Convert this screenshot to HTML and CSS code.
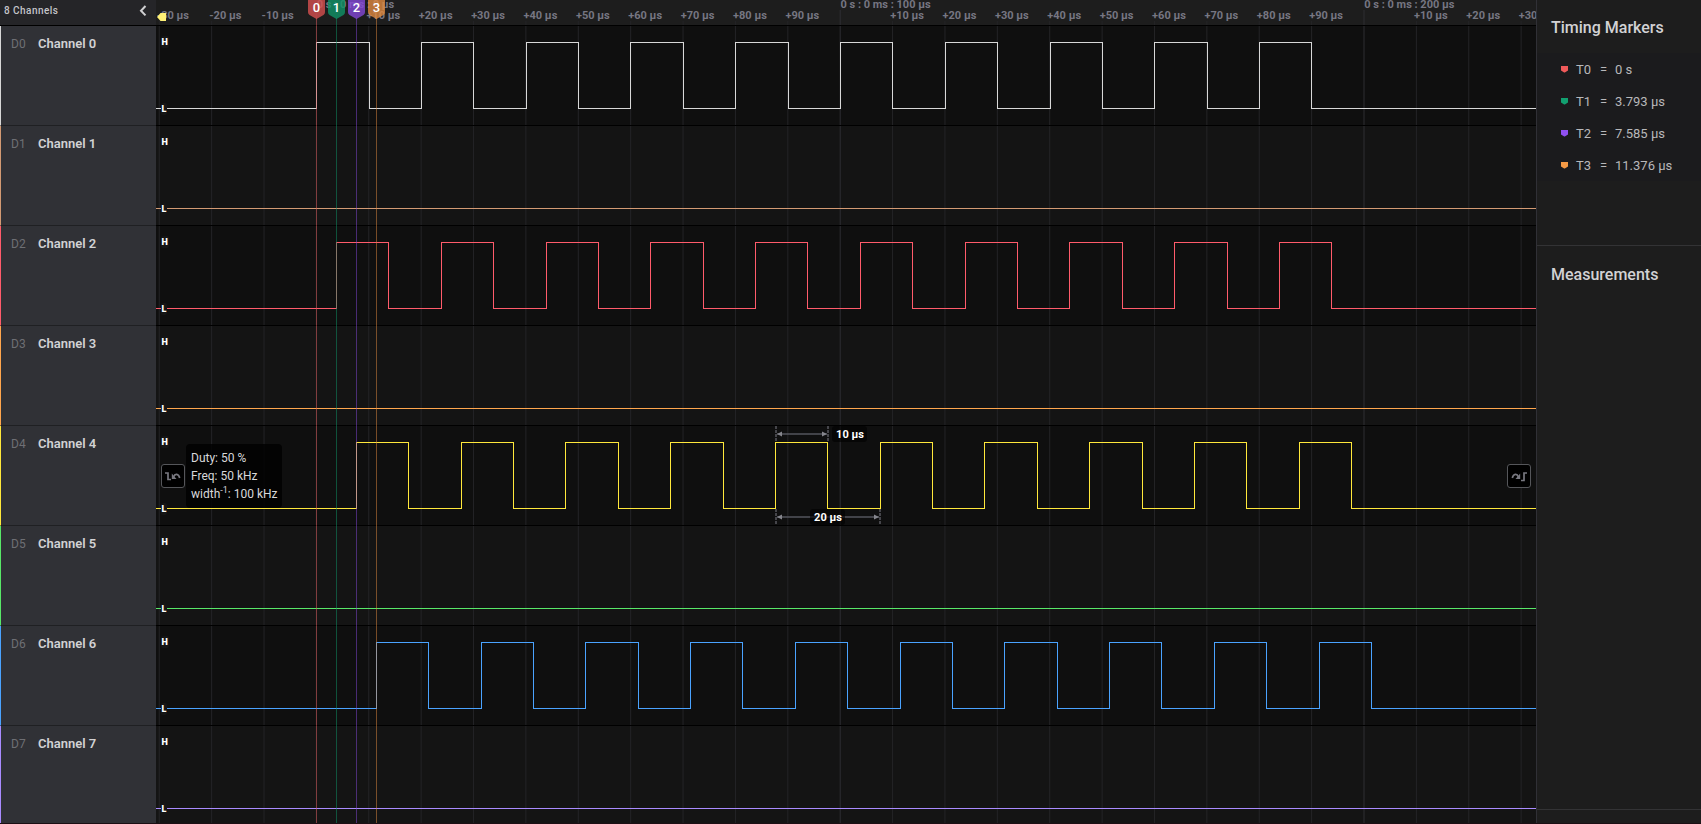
FILE: index.html
```html
<!DOCTYPE html>
<html lang="en">
<head>
    <meta charset="UTF-8" />
    <title>Logic Analyzer</title>
    <link rel="stylesheet" href="styles.css">
</head>
<body>
    <div class="app">
        <aside class="channels">
            <header class="channels-header">
                <span>8 Channels</span>
                <svg class="collapse" width="8" height="12" viewBox="0 0 8 12"><path d="M6.5 1 L2 5.7 L6.5 10.4" /></svg>
            </header>
            <div id="channelList"></div>
        </aside>

        <main class="plot" id="plot">
            <svg class="ruler" id="ruler"></svg>
            <div id="lanes"></div>
            <svg class="markers" id="markers"></svg>

            <svg class="measure" id="measure"></svg>
            <span class="measure-label width-label">10 µs</span>
            <span class="measure-label period-label">20 µs</span>

            <button class="nav nav-prev" aria-label="Previous edge">
                <svg width="22" height="22" viewBox="0 0 22 22">
                    <path d="M3 8 H6 V14.5 H9" />
                    <path d="M11.5 12 C13 8.2 16.5 8.6 17.7 13" />
                    <path class="head" d="M9.8 8.5 V14 H14.5 Z" />
                </svg>
            </button>
            <button class="nav nav-next" aria-label="Next edge">
                <svg width="22" height="22" viewBox="0 0 22 22">
                    <path d="M19 8 H16 V15.5 H13" />
                    <path d="M10.5 12 C9 8.2 5.5 8.6 4.3 13" />
                    <path class="head" d="M12.2 8.5 V14 H7.5 Z" />
                </svg>
            </button>

            <div class="tooltip">
                <div>Duty: 50 %</div>
                <div>Freq: 50 kHz</div>
                <div>width<sup>-1</sup>: 100 kHz</div>
            </div>
        </main>

        <aside class="sidebar">
            <section class="panel timing">
                <h2>Timing Markers</h2>
                <ul class="marker-list">
                    <li><i class="flag red"></i><span class="name">T0</span><span class="eq">=</span><span>0 s</span></li>
                    <li><i class="flag green"></i><span class="name">T1</span><span class="eq">=</span><span>3.793 µs</span></li>
                    <li><i class="flag purple"></i><span class="name">T2</span><span class="eq">=</span><span>7.585 µs</span></li>
                    <li><i class="flag orange"></i><span class="name">T3</span><span class="eq">=</span><span>11.376 µs</span></li>
                </ul>
            </section>
            <section class="panel measurements">
                <h2>Measurements</h2>
            </section>
        </aside>
    </div>
    <script src="script.js"></script>
</body>
</html>
```
FILE: styles.css
```css
* {
    box-sizing: border-box;
}

body {
    margin: 0;
    background: #1d1d1d;
    color: #d2d2d4;
    font-family: Roboto, sans-serif;
    overflow: hidden;
}

.app {
    display: grid;
    grid-template-columns: 156px 1fr 165px;
    height: 100vh;
    overflow: hidden;
    border-bottom: 1px solid #1c0f14;
}

/* Channel list */
.channels {
    background: #303136;
    overflow: hidden;
}

.channels-header {
    display: flex;
    align-items: center;
    justify-content: space-between;
    height: 26px;
    padding: 0 9px 4px 4px;
    background: #252528;
    border-bottom: 1px solid #000;
    font-size: 10px;
    font-weight: 500;
    letter-spacing: 0.45px;
    color: #c4c4c8;
}

.collapse {
    fill: none;
    stroke: #d0d0d2;
    stroke-width: 2;
}

.channel {
    display: flex;
    gap: 14px;
    height: 100px;
    padding: 10px 0 0 10px;
    border-left: 1px solid;
    border-bottom: 1px solid #1f2023;
    font-size: 13px;
    line-height: 16px;
}

.channel .id {
    width: 13px;
    color: #6e6f74;
    font-size: 12px;
    white-space: nowrap;
}

.channel .title {
    color: #d2d2d4;
    font-weight: 600;
}

/* Waveforms */
.plot {
    position: relative;
    overflow: hidden;
    background: #0f0f0f;
}

.ruler,
.lane {
    display: block;
    width: 100%;
}

.ruler {
    height: 26px;
    background: #1d1d1d;
    border-bottom: 1px solid #000;
}

.ruler text {
    fill: #767682;
    font-size: 11px;
    font-weight: 700;
}

.lane {
    height: 100px;
    background: #0f0f0f;
    border-bottom: 1px solid #000;
}

.lane:nth-child(even) {
    background: #141414;
}

.grid-line {
    stroke: #242427;
}

.grid-line.major {
    stroke: #2e2e33;
}

.trace {
    fill: none;
    stroke-width: 1;
    shape-rendering: crispEdges;
}

.level-bg {
    fill: #161616;
}

.level {
    fill: #fff;
    font-size: 9px;
    font-weight: 900;
}

.markers {
    position: absolute;
    left: 0;
    top: 0;
    width: 100%;
    height: 100%;
}

.markers line {
    opacity: 0.5;
    shape-rendering: crispEdges;
}

.markers path {
    opacity: 0.8;
}

.markers text {
    fill: #fff;
    font-size: 13px;
    font-weight: 500;
    text-anchor: middle;
}

.measure {
    position: absolute;
    left: 619px;
    top: 426px;
    width: 110px;
    height: 100px;
    stroke: #55565e;
    stroke-width: 1.5;
}

.measure .tick {
    stroke-dasharray: 3 1;
    stroke-width: 2;
    stroke: #45454a;
}

.measure .arrow {
    fill: #85858c;
    stroke: none;
}

.measure-label {
    position: absolute;
    width: 35px;
    height: 16px;
    border-radius: 3px;
    background: rgba(0, 0, 0, 0.6);
    color: #fff;
    font-size: 11px;
    font-weight: 700;
    line-height: 17px;
    text-align: center;
}

.width-label {
    left: 676px;
    top: 426px;
    padding-left: 1px;
}

.period-label {
    left: 654px;
    top: 509px;
    padding-left: 1px;
}

.nav {
    position: absolute;
    top: 464px;
    width: 24px;
    height: 24px;
    padding: 0;
    border: 1px solid #55565a;
    border-radius: 3px;
    background: #000;
}

.nav-prev {
    left: 5px;
}

.nav-next {
    right: 5px;
}

.nav svg {
    display: block;
    fill: none;
    stroke: #77777f;
    stroke-width: 1.7;
}

.nav .head {
    fill: #77777f;
    stroke: none;
}

.tooltip {
    position: absolute;
    left: 30px;
    top: 444px;
    width: 96px;
    height: 64px;
    padding: 5px;
    border-radius: 4px;
    background: rgba(0, 0, 0, 0.8);
    color: #d8d8da;
    font-size: 12px;
    line-height: 18px;
    white-space: nowrap;
}

.tooltip sup {
    font-size: 9px;
    line-height: 0;
}

/* Right sidebar */
.sidebar {
    display: flex;
    flex-direction: column;
    border-left: 1px solid #303036;
    padding-bottom: 13px;
}

.panel {
    border-bottom: 1px solid #333335;
}

.panel h2 {
    margin: 0;
    padding-left: 14px;
    color: #d2d2d4;
    font-size: 16px;
    font-weight: 500;
    line-height: 20px;
}

.timing {
    height: 246px;
    padding-top: 18px;
}

.measurements {
    flex: 1;
    padding-top: 19px;
}

.marker-list {
    list-style: none;
    margin: 15px 0 0;
    padding: 0;
    background: #1b1b1d;
}

.marker-list li {
    display: flex;
    align-items: center;
    height: 32px;
    padding-left: 24px;
    color: #b8b8ba;
    font-size: 13px;
}

.flag {
    width: 7px;
    height: 7px;
    margin-right: 8px;
    clip-path: polygon(0 0, 100% 0, 100% 70%, 55% 100%, 45% 100%, 0 70%);
}

.flag.red { background: #f05a5a; }
.flag.green { background: #12a070; }
.flag.purple { background: #9050f0; }
.flag.orange { background: #f59a45; }

.name {
    width: 24px;
}

.eq {
    width: 15px;
}
```
FILE: script.js
```js
const ORIGIN = 160.2;   // x of 0 s inside the plot
const SCALE = 5.238;    // pixels per µs
const WIDTH = 1380;

const channels = [
    { color: '#d8d8d8', start: 0 },
    { color: '#d39a73' },
    { color: '#ff5b6b', start: 3.793 },
    { color: '#ffa64d' },
    { color: '#ffe83b', start: 7.585 },
    { color: '#58e868' },
    { color: '#4aa3ff', start: 11.376 },
    { color: '#a98bff' }
];

const markers = [
    { x: 160, color: '#d75050' },
    { x: 180, color: '#109468' },
    { x: 200, color: '#8448d8' },
    { x: 220, color: '#e08a40' }
];

function toX(us) {
    return Math.round(ORIGIN + us * SCALE) + 0.5;
}

// 10 pulses, 10 µs high and 10 µs low
function tracePath(start) {
    let d = 'M0 82.5';
    if (start !== undefined) {
        for (let i = 0; i < 10; i++) {
            const rise = toX(start + i * 20);
            const fall = toX(start + i * 20 + 10);
            d += ` H${rise} V16.5 H${fall} V82.5`;
        }
    }
    return d + ` H${WIDTH}`;
}

function gridLines(ruler) {
    let out = '';
    for (let i = -3; i <= 23; i++) {
        const x = (ORIGIN + 0.2 + i * 10 * SCALE).toFixed(2);
        const major = i % 10 === 0;
        const top = ruler ? (major ? 10 : 21) : 0;
        out += `<line class="grid-line${major ? ' major' : ''}" x1="${x}" x2="${x}" y1="${top}" y2="100" />`;
    }
    return out;
}

function drawRuler() {
    let out = gridLines(true);
    for (let i = -3; i <= 23; i++) {
        const x = ORIGIN + i * 10 * SCALE;
        if (i % 10 === 0) {
            out += `<text x="${x + 0.5}" y="8">0 s : 0 ms : ${i * 10} µs</text>`;
        } else {
            const n = i < 0 ? i * 10 : '+' + (i % 10) * 10;
            out += `<text x="${x - 2.2}" y="19.3">${n} µs</text>`;
        }
    }
    out += '<path d="M1 17 L4.5 13 H10 V21 H4.5 Z" fill="#fff176" />';
    document.getElementById('ruler').innerHTML = out;
}

function drawChannels() {
    let list = '';
    let lanes = '';
    channels.forEach((ch, i) => {
        list += `<div class="channel" style="border-left-color: ${ch.color}"><span class="id">D${i}</span><span class="title">Channel ${i}</span></div>`;
        lanes += `<svg class="lane">${gridLines(false)}
            <path class="trace" d="${tracePath(ch.start)}" stroke="${ch.color}" />
            <rect class="level-bg" x="5" y="10" width="8" height="12" rx="2" />
            <rect class="level-bg" x="5" y="77" width="6" height="12" rx="2" />
            <text class="level" x="5.5" y="19.2">H</text>
            <text class="level" x="5.5" y="86.2">L</text>
        </svg>`;
    });
    document.getElementById('channelList').innerHTML = list;
    document.getElementById('lanes').innerHTML = lanes;
}

function drawMarkers() {
    let out = '';
    markers.forEach((m, i) => {
        const x = m.x + 0.5;
        out += `<line x1="${x}" x2="${x}" y1="18" y2="824" stroke="${m.color}" />
            <path d="M${x - 8.5} 0 H${x + 8.5} V12 Q${x + 8.5} 14 ${x + 7} 15 L${x} 19 L${x - 7} 15 Q${x - 8.5} 14 ${x - 8.5} 12 Z" fill="${m.color}" />
            <text x="${x}" y="12.4">${i}</text>`;
    });
    document.getElementById('markers').innerHTML = out;
}

function arrow(x1, x2, y) {
    return `<line x1="${x1}" x2="${x2}" y1="${y}" y2="${y}" />
        <path class="arrow" d="M${x1} ${y} l5 -2.5 v5 Z M${x2} ${y} l-5 -2.5 v5 Z" />`;
}

function drawMeasure() {
    document.getElementById('measure').innerHTML = `
        <line class="tick" x1="1" x2="1" y1="0" y2="16" />
        <line class="tick" x1="53" x2="53" y1="0" y2="16" />
        <line class="tick" x1="1" x2="1" y1="83" y2="99" />
        <line class="tick" x1="105" x2="105" y1="83" y2="99" />
        ${arrow(2, 52, 8)}
        ${arrow(2, 104, 91)}`;
}

drawRuler();
drawChannels();
drawMarkers();
drawMeasure();
```
